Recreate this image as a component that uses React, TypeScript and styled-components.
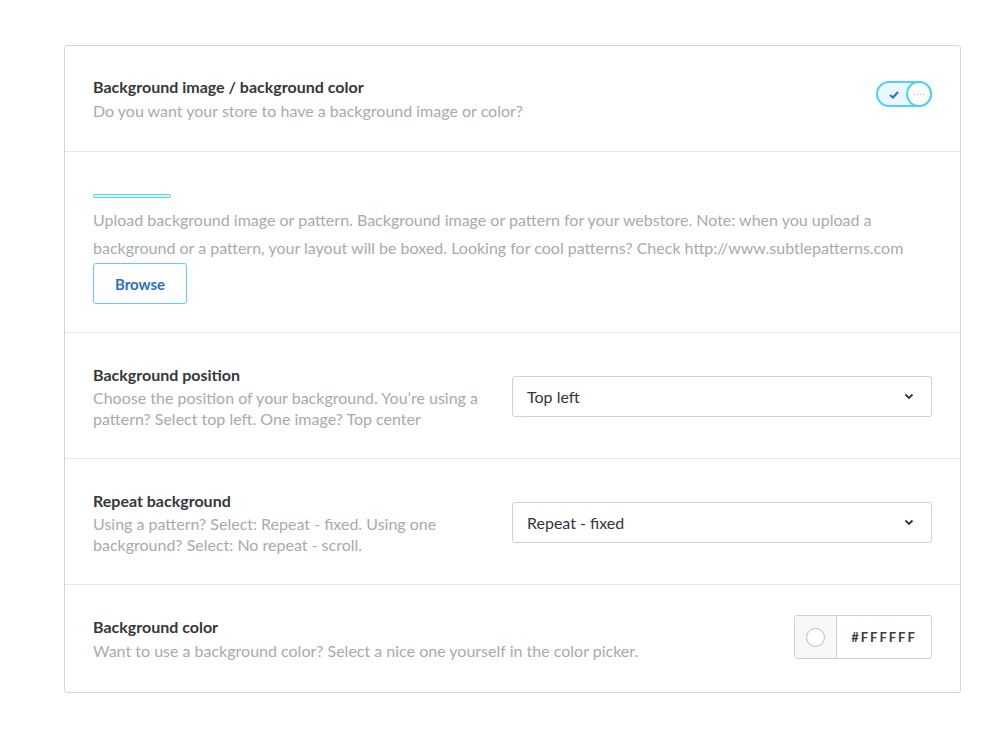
import React, { useState } from "react";
import styled, { createGlobalStyle } from "styled-components";

const GlobalStyle = createGlobalStyle`
  body {
    margin: 0;
    background: #ffffff;
    font-family: Lato, "Open Sans", sans-serif;
    -webkit-font-smoothing: antialiased;
  }
`;

const Page = styled.div`
  padding: 45px 38px 45px 64px;
`;

const Card = styled.div`
  width: 897px;
  border: 1px solid #d4d6d8;
  border-radius: 3px;
  background: #fff;
  box-sizing: border-box;
`;

const Section = styled.div<{ $pad?: string }>`
  display: flex;
  align-items: center;
  justify-content: space-between;
  gap: 30px;
  padding: ${(p) => p.$pad || "28px 28px"};
  border-bottom: 1px solid #e4e6e8;
  &:last-child {
    border-bottom: none;
  }
`;

const Column = styled.div`
  display: flex;
  flex-direction: column;
`;

const TextBlock = styled.div<{ $width?: string }>`
  width: ${(p) => p.$width || "auto"};
`;

const Title = styled.div`
  font-size: 16px;
  font-weight: 700;
  color: #35383b;
  line-height: 24px;
`;

const Desc = styled.div<{ $lh?: string }>`
  font-size: 16px;
  color: #a6abaf;
  line-height: ${(p) => p.$lh || "24px"};
`;

const Toggle = styled.button<{ $on: boolean }>`
  position: relative;
  width: 56px;
  height: 26px;
  border-radius: 13px;
  border: 2px solid #4fd0f7;
  background: #e8f8fe;
  padding: 0;
  margin-top: -10px;
  cursor: pointer;
  box-sizing: border-box;
`;

const Knob = styled.span`
  position: absolute;
  right: 0;
  top: 0;
  width: 22px;
  height: 22px;
  border-radius: 50%;
  background: #fff;
  box-shadow: 0 0 0 2px #4fd0f7;
  display: flex;
  align-items: center;
  justify-content: center;
`;

const Check = styled.svg`
  position: absolute;
  left: 11px;
  top: 8px;
`;

const Bar = styled.div`
  width: 78px;
  height: 4px;
  border: 1px solid #56d3f8;
  border-radius: 3px;
  background: #dff6fe;
  box-sizing: border-box;
  margin: 14px 0 8px;
`;

const Browse = styled.button`
  width: 94px;
  height: 41px;
  margin-top: 1px;
  border: 1px solid #5cd1f5;
  border-radius: 3px;
  background: #fff;
  color: #2b6fc2;
  font-family: Lato, sans-serif;
  font-size: 15px;
  font-weight: 700;
  cursor: pointer;
`;

const Select = styled.div`
  width: 420px;
  height: 41px;
  border: 1px solid #cfd3d6;
  border-radius: 3px;
  display: flex;
  align-items: center;
  justify-content: space-between;
  padding: 0 17px 0 14px;
  box-sizing: border-box;
  font-size: 16px;
  color: #333638;
  flex-shrink: 0;
`;

const ColorPicker = styled.div`
  display: flex;
  height: 42px;
  margin-top: -4px;
  border: 1px solid #cfd3d6;
  border-radius: 3px;
  overflow: hidden;
  flex-shrink: 0;
`;

const Swatch = styled.div`
  width: 41px;
  background: #f6f7f8;
  border-right: 1px solid #cfd3d6;
  display: flex;
  align-items: center;
  justify-content: center;
`;

const Dot = styled.span`
  width: 17px;
  height: 17px;
  border-radius: 50%;
  border: 1px solid #b9bec2;
  background: #fff;
`;

const Hex = styled.div`
  width: 94px;
  display: flex;
  align-items: center;
  justify-content: center;
  font-family: Lato, sans-serif;
  font-size: 13px;
  font-weight: 700;
  letter-spacing: 2px;
  color: #3a3d40;
`;

const Chevron = () => (
  <svg width="10" height="7" viewBox="0 0 10 7">
    <path d="M1.5 1.5 L5 5 L8.5 1.5" stroke="#333" strokeWidth="1.8" fill="none" />
  </svg>
);

export default function App() {
  const [on, setOn] = useState(true);
  return (
    <>
      <GlobalStyle />
      <Page>
        <Card>
          <Section $pad="29px 28px 28px">
            <TextBlock>
              <Title>Background image / background color</Title>
              <Desc>Do you want your store to have a background image or color?</Desc>
            </TextBlock>
            <Toggle $on={on} onClick={() => setOn(!on)}>
              <Check width="10" height="8" viewBox="0 0 10 8">
                <path d="M1 4 L4 6.5 L9 1" stroke="#2b6fc2" strokeWidth="2" fill="none" />
              </Check>
              <Knob>
                <svg width="12" height="3" viewBox="0 0 12 3">
                  <circle cx="1.5" cy="1.5" r="0.8" fill="#c3c8cc" />
                  <circle cx="4.5" cy="1.5" r="0.8" fill="#c3c8cc" />
                  <circle cx="7.5" cy="1.5" r="0.8" fill="#c3c8cc" />
                  <circle cx="10.5" cy="1.5" r="0.8" fill="#c3c8cc" />
                </svg>
              </Knob>
            </Toggle>
          </Section>
          <Section $pad="28px 28px 28px">
            <Column>
              <Bar />
              <Desc $lh="28px">
                Upload background image or pattern. Background image or pattern for your webstore. Note: when you upload a
                background or a pattern, your layout will be boxed. Looking for cool patterns? Check http://www.subtlepatterns.com
              </Desc>
              <div>
                <Browse>Browse</Browse>
              </div>
            </Column>
          </Section>
          <Section $pad="30px 28px 29px">
            <TextBlock $width="400px">
              <Title>Background position</Title>
              <Desc $lh="21px">
                Choose the position of your background. You’re using a pattern? Select top left. One image? Top center
              </Desc>
            </TextBlock>
            <Select>
              Top left
              <Chevron />
            </Select>
          </Section>
          <Section $pad="30px 28px 29px">
            <TextBlock $width="380px">
              <Title>Repeat background</Title>
              <Desc $lh="21px">
                Using a pattern? Select: Repeat - fixed. Using one background? Select: No repeat - scroll.
              </Desc>
            </TextBlock>
            <Select>
              Repeat - fixed
              <Chevron />
            </Select>
          </Section>
          <Section $pad="30px 28px 29px">
            <TextBlock>
              <Title>Background color</Title>
              <Desc>Want to use a background color? Select a nice one yourself in the color picker.</Desc>
            </TextBlock>
            <ColorPicker>
              <Swatch>
                <Dot />
              </Swatch>
              <Hex>#FFFFFF</Hex>
            </ColorPicker>
          </Section>
        </Card>
      </Page>
    </>
  );
}
